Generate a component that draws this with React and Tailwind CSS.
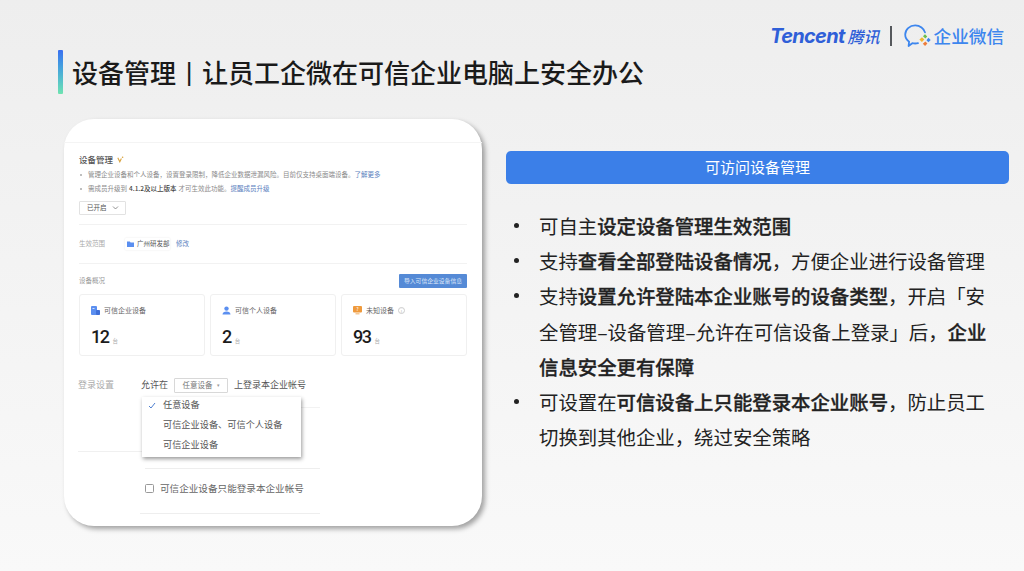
import React from "react";

const cjk = { fontFamily: '"Noto Sans CJK SC", "Noto Sans", sans-serif' };

function Logo() {
  return (
    <div className="flex items-center">
      <span className="text-[20px] leading-none font-bold italic text-[#2f5fd8] tracking-[-0.7px]" style={{ fontFamily: '"Inter", sans-serif' }}>Tencent</span>
      <span className="text-[16px] leading-none font-medium italic text-[#2f5fd8] ml-[3px]">腾讯</span>
      <span className="w-[2px] h-[20px] bg-[#55585c] ml-[10px] mr-[12px]" />
      <svg width="28" height="24" viewBox="0 0 28 24" fill="none">
        <path d="M14 19.2c-.9.2-1.8.3-2.8.3-1 0-1.9-.1-2.9-.3L4.6 22l.5-4.3C2.6 16 1.2 13.500 1.200 10.600 1.200 5.500 5.700 1.400 11.200 1.400c4.800 0 8.800 3 9.800 7" stroke="#3d86ee" strokeWidth="1.8" strokeLinecap="round" strokeLinejoin="round" />
        <path d="M21 10.200l2.200 2.300-1.900 1.900-2.300-2.200z" fill="#6cc04a" />
        <path d="M24.400 13.700l2.300 2.300-2.300 2.300-1.900-2.100z" fill="#3d86ee" />
        <path d="M21.400 17.600l2 2-2.300 2.300-2.300-2.200z" fill="#ee7d3a" />
        <path d="M18 13.200l2.300 2.400-2.400 2.400-2.500-2.400z" fill="#f2b632" />
      </svg>
      <span className="text-[17.600px] leading-none font-medium text-[#3d86ee] ml-[2px]">企业微信</span>
    </div>
  );
}

function StatCard({ icon, label, value, info }) {
  return (
    <div className="flex-1 h-[62px] border border-[#f0f0f0] rounded-[3px] pl-[11px] pt-[9px]">
      <div className="flex items-center h-[12px]">
        {icon}
        <span className="text-[7px] leading-none text-[#666] ml-[4px]">{label}</span>
        {info && (
          <span className="ml-[4px] w-[7px] h-[7px] rounded-full border border-[#ccc] text-[5px] leading-[5px] text-[#bbb] text-center">i</span>
        )}
      </div>
      <div className="flex items-baseline mt-[10px]">
        <span className="text-[18px] leading-[22px] font-medium text-[#1c1c1c] tracking-[-1.5px]" style={{ fontFamily: '"Roboto", sans-serif' }}>{value}</span>
        <span className="text-[5.5px] text-[#aaa] ml-[4px]">台</span>
      </div>
    </div>
  );
}

const CorpIcon = (
  <svg width="9" height="9" viewBox="0 0 9 9"><rect x="0" y="0" width="6" height="9" rx="1" fill="#5b8ff0" /><rect x="5" y="4" width="4" height="5" rx="0.8" fill="#3f6fd8" /><rect x="1.500" y="2" width="2" height="1" fill="#cfe0ff" /></svg>
);
const PersonIcon = (
  <svg width="9" height="9" viewBox="0 0 9 9"><circle cx="4.500" cy="2.600" r="2.200" fill="#5b8ff0" /><path d="M0.500 8.500c0-2 1.600-3 4-3s4 1 4 3z" fill="#5b8ff0" /></svg>
);
const UnknownIcon = (
  <svg width="9" height="9" viewBox="0 0 9 9"><rect x="0" y="0" width="9" height="6.500" rx="1" fill="#ef9a3c" /><rect x="2.500" y="7" width="4" height="1.500" fill="#f6c893" /><text x="4.500" y="5.200" fontSize="5" textAnchor="middle" fill="#fff">?</text></svg>
);

function ScreenCard() {
  return (
    <div className="relative w-[418px] h-[407px] bg-white rounded-[30px] shadow-[3px_3px_5px_rgba(0,0,0,0.35)] flex flex-col shrink-0">
      <div className="h-[24px] border-b border-[#f4f4f4]" />
      <div className="px-[15px] pt-[10px]">
        <div className="flex items-center h-[12px]">
          <span className="text-[8.5px] leading-none text-[#555] font-medium">设备管理</span>
          <svg className="ml-[4px]" width="7" height="7" viewBox="0 0 7 7" fill="none"><path d="M.8 1.800L2.800 5.800 4.400 2.400" stroke="#d9a441" strokeWidth="1.100" /><circle cx="5.600" cy="1.300" r="0.800" fill="#d9a441" /></svg>
        </div>
        <div className="flex items-center h-[14px] mt-[3px] text-[6.5px] text-[#8a8a8a] whitespace-nowrap">
          <span className="w-[2px] h-[2px] rounded-full bg-[#aaa] ml-[1px] mr-[6px]" />
          管理企业设备和个人设备，设置登录限制，降低企业数据泄漏风险。目前仅支持桌面端设备。
          <span className="text-[#5b82c0]">了解更多</span>
        </div>
        <div className="flex items-center h-[14px] text-[6.5px] text-[#8a8a8a] whitespace-nowrap">
          <span className="w-[2px] h-[2px] rounded-full bg-[#aaa] ml-[1px] mr-[6px]" />
          需成员升级到<span className="text-[#444] font-medium mx-[2px]">4.1.2及以上版本</span>才可生效此功能。
          <span className="text-[#5b82c0]">提醒成员升级</span>
        </div>
        <div className="mt-[5px] w-[47px] h-[14px] border border-[#e2e2e2] rounded-[1px] flex items-center pl-[7px] text-[6.5px] text-[#555]">
          已开启
          <svg className="ml-[5px]" width="7" height="4" viewBox="0 0 7 4" fill="none"><path d="M1 .5l2.500 2.500L6 .5" stroke="#666" strokeWidth="0.700" /></svg>
        </div>
        <div className="mt-[9px] border-t border-[#f2f2f2]" />
        <div className="flex items-center h-[38px] text-[6.5px] whitespace-nowrap">
          <span className="text-[#aaa] w-[46px] shrink-0">生效范围</span>
          <span className="flex items-center h-[12px] w-[45px] shrink-0 shadow-[0_0_2px_rgba(0,0,0,0.1)] pl-[2px] text-[#555] rounded-[1px]">
            <svg className="mr-[3px] shrink-0" width="7" height="6" viewBox="0 0 7 6"><path d="M0 .5h2.800l.8 1H7V6H0z" fill="#5b8ff0" /></svg>广州研发部
          </span>
          <span className="text-[#5b82c0] ml-[6px]">修改</span>
        </div>
        <div className="border-t border-[#f2f2f2]" />
        <div className="flex items-center justify-between mt-[10px] h-[14px]">
          <span className="text-[6.5px] text-[#999]">设备概况</span>
          <span className="w-[68px] h-[14px] bg-[#558ad6] rounded-[1px] flex items-center justify-center text-[5.8px] text-[#dbe6f8]">导入可信企业设备信息</span>
        </div>
        <div className="flex gap-[5px] mt-[6px]">
          <StatCard icon={CorpIcon} label="可信企业设备" value="12" />
          <StatCard icon={PersonIcon} label="可信个人设备" value="2" />
          <StatCard icon={UnknownIcon} label="未知设备" value="93" info />
        </div>
        <div className="relative flex items-center mt-[21px] h-[16px] text-[9px] whitespace-nowrap">
          <span className="text-[#aaa] w-[63px] -ml-[1px] shrink-0">登录设置</span>
          <span className="text-[#555]">允许在</span>
          <span className="ml-[6px] mr-[6px] h-[15px] w-[54px] border border-[#d8d8d8] rounded-[1px] flex items-center justify-center text-[7.500px] text-[#777]">任意设备<span className="ml-[4px] text-[5px] text-[#999]">▾</span></span>
          <span className="text-[#555]">上登录本企业帐号</span>
          <div className="absolute left-[63px] top-[20px] w-[159px] h-[60px] bg-white shadow-[1px_2px_4px_rgba(0,0,0,0.4)] text-[9.200px] text-[#555] z-10">
            <div className="flex items-center h-[16px] mb-[1px] pl-[6px]">
              <svg width="8" height="7" viewBox="0 0 8 7" fill="none"><path d="M1 4l2 2 4-5" stroke="#4f7fd0" strokeWidth="1" /></svg>
              <span className="ml-[7px]">任意设备</span>
            </div>
            <div className="h-[20px] leading-[20px] pl-[21px]">可信企业设备、可信个人设备</div>
            <div className="h-[20px] leading-[20px] pl-[21px]">可信企业设备</div>
          </div>
        </div>
        <div className="ml-[141px] w-[100px] mt-[14px] border-t border-[#f2f2f2]" />
        <div className="mt-[43px] w-[160px] border-t border-[#f0f0f0] -ml-[1px]" />
        <div className="ml-[66px] w-[175px] mt-[16px] border-t border-[#eeeeee]" />
        <div className="ml-[66px] flex items-center mt-[13px] h-[12px] text-[9.600px] text-[#666] whitespace-nowrap">
          <span className="w-[9px] h-[9px] border border-[#999] rounded-[1.500px] mr-[6px]" />
          可信企业设备只能登录本企业帐号
        </div>
        <div className="ml-[61px] w-[180px] mt-[19px] border-t border-[#eeeeee]" />
      </div>
    </div>
  );
}

function Bullet({ children }) {
  return (
    <li className="flex">
      <span className="w-[33px] pl-[8px] shrink-0 flex items-start">
        <span className="w-[4.500px] h-[4.500px] rounded-full bg-[#222] mt-[15px]" />
      </span>
      <span className="w-[456px]">{children}</span>
    </li>
  );
}

const Strong = ({ children }) => (
  <b className="font-medium [-webkit-text-stroke:0.3px_#222]">{children}</b>
);

export default function App() {
  return (
    <div className="w-[1024px] h-[571px] overflow-hidden flex flex-col bg-gradient-to-b from-[#eeeeee] to-[#f9f9f9]" style={cjk}>
      <div className="h-[50px] flex justify-end items-center pr-[20px] pt-[22px]">
        <Logo />
      </div>
      <div className="h-[44px] pl-[58px] flex items-center">
        <div className="w-[5px] h-[44px] rounded-[1px] bg-gradient-to-b from-[#3b6ff0] to-[#6fe3b0]" />
        <h1 className="ml-[9px] text-[26px] leading-none font-medium text-[#1a1a1a] whitespace-nowrap flex items-center">
          设备管理
          <span className="w-[26px] text-center font-normal" style={{ fontFamily: '"Liberation Sans", sans-serif' }}>|</span>
          让员工企微在可信企业电脑上安全办公
        </h1>
      </div>
      <div className="flex mt-[25px] pl-[64px]">
        <ScreenCard />
        <div className="ml-[24px] w-[503px] pt-[32px]">
          <div className="h-[33px] rounded-[5px] bg-[#3b7fe8] flex items-center justify-center text-[15px] text-white">可访问设备管理</div>
          <ul className="mt-[24px] text-[19.400px] leading-[35.200px] text-[#222]">
            <Bullet>可自主<Strong>设定设备管理生效范围</Strong></Bullet>
            <Bullet>支持<Strong>查看全部登陆设备情况</Strong>，方便企业进行设备管理</Bullet>
            <Bullet>支持<Strong>设置允许登陆本企业账号的设备类型</Strong>，开启「安全管理–设备管理–允许在可信设备上登录」后，<Strong>企业信息安全更有保障</Strong></Bullet>
            <Bullet>可设置在<Strong>可信设备上只能登录本企业账号</Strong>，防止员工切换到其他企业，绕过安全策略</Bullet>
          </ul>
        </div>
      </div>
    </div>
  );
}
